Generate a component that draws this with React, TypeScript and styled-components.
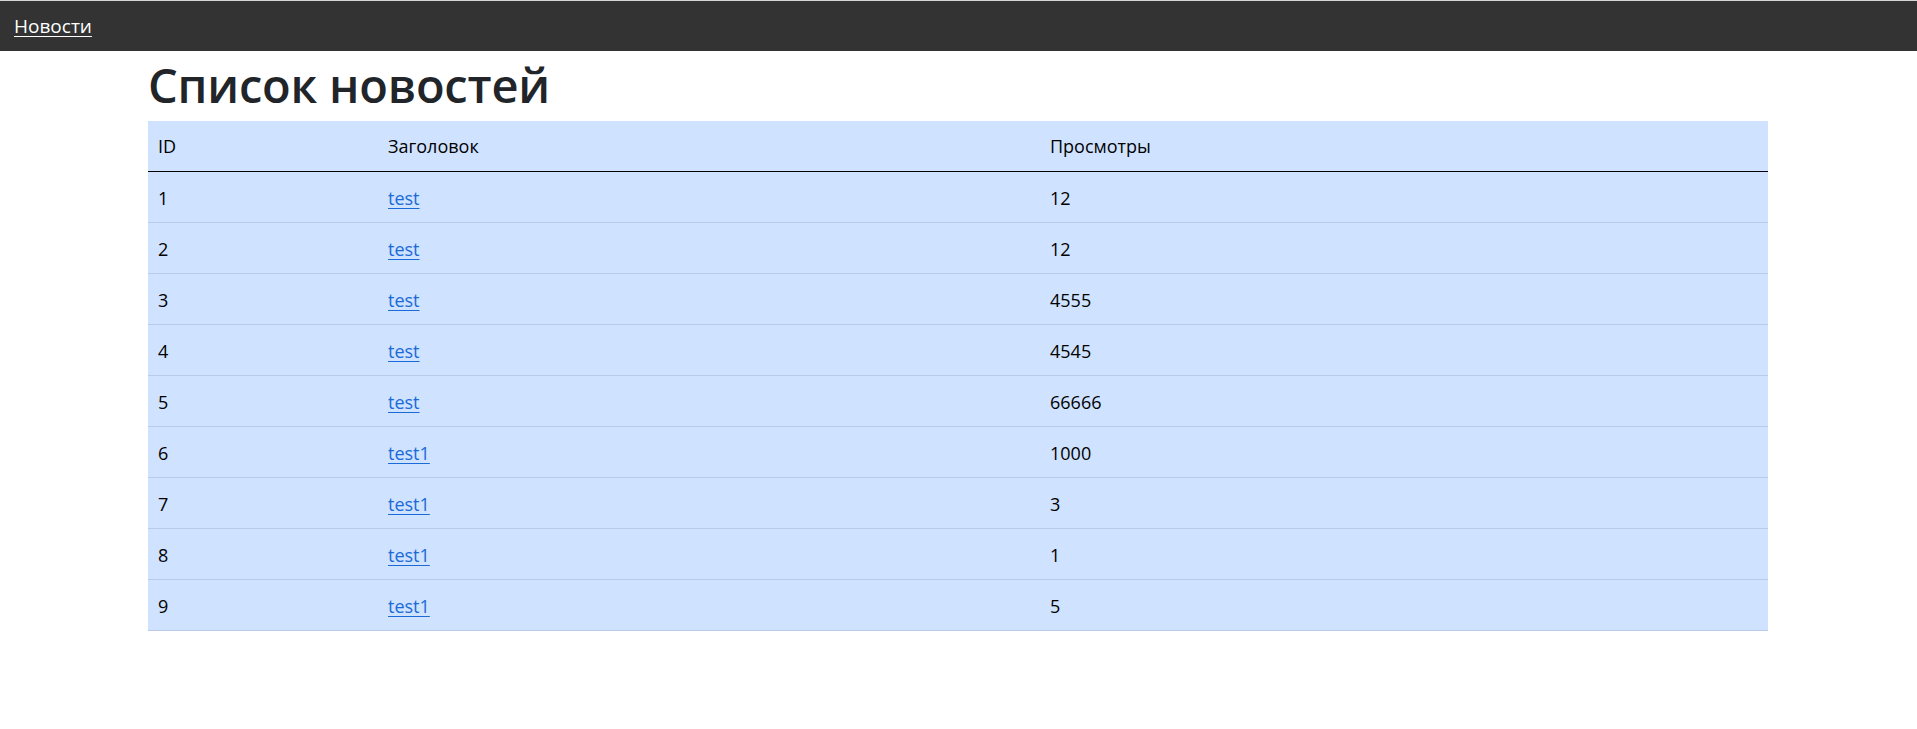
import React from "react";
import styled, { createGlobalStyle } from "styled-components";

const GlobalStyle = createGlobalStyle`
  html, body {
    margin: 0;
    padding: 0;
    background: #ffffff;
    font-family: "Open Sans", "Noto Sans", Arial, sans-serif;
    color: #212529;
  }
  * { box-sizing: border-box; }
`;

const NavBar = styled.nav`
  height: 51px;
  background: #333333;
  border-top: 1px solid #d6d6d6;
  display: flex;
  align-items: center;
  padding: 0 14px 0;
`;

const NavLink = styled.a`
  color: #ffffff;
  font-size: 19px;
  line-height: 24px;
  text-decoration: underline;
  text-underline-offset: 3px;
  text-decoration-thickness: 1px;
`;

const Container = styled.main`
  width: 1620px;
  margin-left: 148px;
`;

const Title = styled.h1`
  margin: 6px 0 7px;
  font-size: 47px;
  line-height: 57px;
  font-weight: 600;
  color: #212529;
  letter-spacing: -0.2px;
`;

const Table = styled.table`
  width: 1620px;
  border-collapse: collapse;
  table-layout: fixed;
  background: #cfe2ff;
  color: #000000;
  font-size: 18px;
`;

const HeadCell = styled.th<{ $w: number }>`
  width: ${(p) => p.$w}px;
  text-align: left;
  font-weight: 400;
  padding: 12px 10px 12px;
  line-height: 26px;
  border-bottom: 1px solid #000000;
`;

const Row = styled.tr`
  border-bottom: 1px solid #b9cbe8;
`;

const Cell = styled.td`
  padding: 13px 10px 11px;
  line-height: 26px;
`;

const TitleLink = styled.a`
  color: #1a6bd8;
  text-decoration: underline;
  text-underline-offset: 3px;
`;

const news = [
  { id: 1, title: "test", views: 12 },
  { id: 2, title: "test", views: 12 },
  { id: 3, title: "test", views: 4555 },
  { id: 4, title: "test", views: 4545 },
  { id: 5, title: "test", views: 66666 },
  { id: 6, title: "test1", views: 1000 },
  { id: 7, title: "test1", views: 3 },
  { id: 8, title: "test1", views: 1 },
  { id: 9, title: "test1", views: 5 },
];

export default function App() {
  return (
    <>
      <GlobalStyle />
      <NavBar>
        <NavLink href="#">Новости</NavLink>
      </NavBar>
      <Container>
        <Title>Список новостей</Title>
        <Table>
          <thead>
            <tr>
              <HeadCell $w={230}>ID</HeadCell>
              <HeadCell $w={662}>Заголовок</HeadCell>
              <HeadCell $w={728}>Просмотры</HeadCell>
            </tr>
          </thead>
          <tbody>
            {news.map((n) => (
              <Row key={n.id}>
                <Cell>{n.id}</Cell>
                <Cell>
                  <TitleLink href="#">{n.title}</TitleLink>
                </Cell>
                <Cell>{n.views}</Cell>
              </Row>
            ))}
          </tbody>
        </Table>
      </Container>
    </>
  );
}
